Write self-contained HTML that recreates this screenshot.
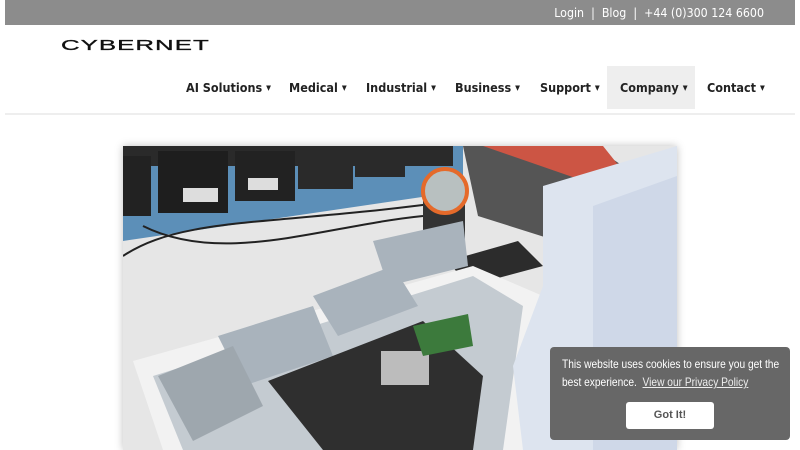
<!DOCTYPE html>
<html><head><meta charset="utf-8"><style>
*{margin:0;padding:0;box-sizing:border-box}
body{width:800px;height:450px;overflow:hidden;background:#fff;font-family:"DejaVu Sans Condensed","DejaVu Sans","Liberation Sans",sans-serif;position:relative}
.top{position:absolute;left:5px;top:0;width:790px;height:25px;background:#8c8c8c;color:#fff;font-size:12.3px}
.top span{position:absolute;right:31px;top:6px;white-space:nowrap}
.logo{position:absolute;left:61px;top:37px;font-family:"Liberation Sans",sans-serif;font-size:15px;letter-spacing:0.6px;color:#111;transform:scaleX(1.72);transform-origin:left;white-space:nowrap;-webkit-text-stroke:0.3px #111}
.nav{position:absolute;left:5px;top:66px;width:790px;height:49px;border-bottom:2px solid #eee}
.nav div{position:absolute;top:0;height:43px;line-height:43px;font-size:12.5px;font-weight:bold;color:#222;white-space:nowrap}
.nav i{font-style:normal;font-size:7px;vertical-align:2px;margin-left:4px}
.nav .act{background:#eee}
.cookie{position:absolute;left:550px;top:347px;width:240px;height:93px;background:#676767;border-radius:4px}
.ctext{position:absolute;left:12px;top:8px;width:266px;transform:scaleX(0.85);transform-origin:left top;color:#fff;font-family:"Liberation Sans",sans-serif;font-size:12px;line-height:18px}
.ctext u{color:#eee}
.btn{position:absolute;left:76px;top:55px;width:88px;height:27px;background:#fff;border-radius:3px;color:#555;font-family:"Liberation Sans",sans-serif;font-weight:bold;font-size:11px;text-align:center;line-height:27px}
</style></head><body>
<div class="top"><span>Login &nbsp;| &nbsp;Blog &nbsp;| &nbsp;+44 (0)300 124 6600</span></div>
<div class="logo">CYBERNET</div>
<div class="nav">
<div style="left:181px">AI Solutions<i>▼</i></div>
<div style="left:284px">Medical<i>▼</i></div>
<div style="left:361px">Industrial<i>▼</i></div>
<div style="left:450px">Business<i>▼</i></div>
<div style="left:535px">Support<i>▼</i></div>
<div class="act" style="left:602px;width:88px;padding-left:13px">Company<i>▼</i></div>
<div style="left:702px">Contact<i>▼</i></div>
</div>
<svg style="position:absolute;left:123px;top:146px;box-shadow:0 0 8px rgba(0,0,0,.25)" width="554" height="304" viewBox="0 0 554 304">
<rect width="554" height="304" fill="#e6e6e6"/>
<polygon points="0,0 340,0 340,45 0,95" fill="#5c8fb8"/>
<rect x="0" y="0" width="330" height="20" fill="#2a2a2a"/>
<rect x="0" y="10" width="28" height="60" fill="#222"/>
<rect x="35" y="5" width="70" height="62" fill="#1e1e1e"/>
<rect x="112" y="5" width="60" height="50" fill="#222"/>
<rect x="175" y="5" width="55" height="38" fill="#2a2a2a"/>
<rect x="232" y="3" width="50" height="28" fill="#2a2a2a"/>
<rect x="60" y="42" width="35" height="14" fill="#ddd"/>
<rect x="125" y="32" width="30" height="12" fill="#ddd"/>
<polygon points="340,0 470,0 500,20 450,100 355,70" fill="#555"/>
<polygon points="360,0 480,0 500,25 490,45" fill="#c54"/>
<path d="M0,110 C60,70 150,80 330,55" stroke="#222" stroke-width="2" fill="none"/>
<path d="M20,80 C100,120 200,80 300,70" stroke="#222" stroke-width="2" fill="none"/>
<rect x="300" y="50" width="42" height="65" fill="#333"/>
<circle cx="322" cy="45" r="22" fill="#b8c0c0" stroke="#e56a2a" stroke-width="4"/>
<polygon points="325,115 395,95 420,120 345,140" fill="#2c2c2c"/>
<polygon points="10,215 350,120 420,150 420,304 40,304" fill="#f2f2f2"/>
<polygon points="30,230 350,130 400,160 380,304 60,304" fill="#c4cbd1"/>
<polygon points="95,190 190,160 210,210 120,240" fill="#a9b3bc"/>
<polygon points="190,150 270,120 295,160 215,190" fill="#a9b3bc"/>
<polygon points="250,95 340,75 345,120 265,140" fill="#a9b3bc"/>
<polygon points="145,235 300,175 360,230 350,304 200,304" fill="#2f2f2f"/>
<rect x="258" y="205" width="48" height="34" fill="#bcbcbc"/>
<polygon points="290,180 345,168 350,200 300,210" fill="#3c7a3c"/>
<polygon points="35,230 110,200 140,260 70,295" fill="#9ea7ae"/>
<polygon points="420,40 554,0 554,304 400,304 390,220 420,140" fill="#dde4ef"/>
<polygon points="470,60 554,30 554,304 470,304" fill="#cfd8e8"/>
</svg>
<div class="cookie"><div class="ctext">This website uses cookies to ensure you get the best experience. &nbsp;<u>View our Privacy Policy</u></div><div class="btn">Got It!</div></div>
</body></html>
